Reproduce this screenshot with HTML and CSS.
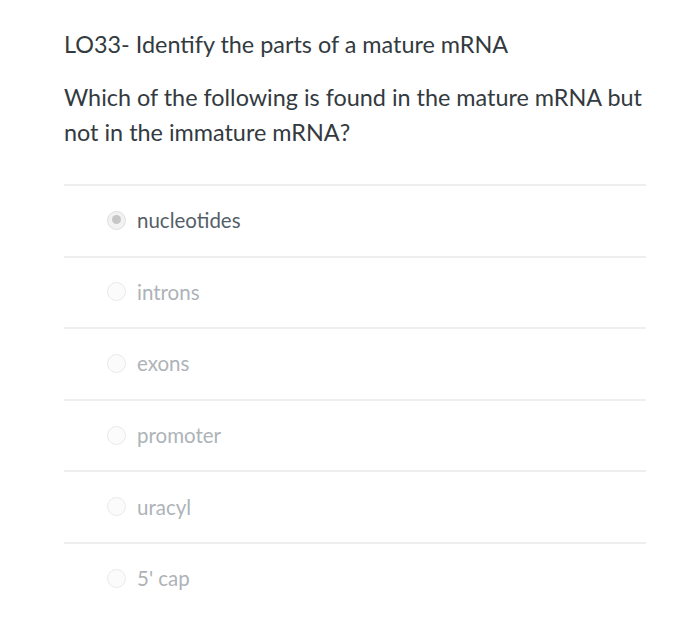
FILE: index.html
```html
<!DOCTYPE html>
<html>
<head>
<meta charset="utf-8">
<link rel="stylesheet" href="styles.css">
</head>
<body>
<div class="quiz">
  <h2 class="title">LO33- Identify the parts of a mature mRNA</h2>
  <p class="question">Which of the following is found in the mature mRNA but not in the immature mRNA?</p>
  <div class="answers">
    <div class="answer selected"><span class="radio"></span><span class="label">nucleotides</span></div>
    <div class="answer"><span class="radio"></span><span class="label">introns</span></div>
    <div class="answer"><span class="radio"></span><span class="label">exons</span></div>
    <div class="answer"><span class="radio"></span><span class="label">promoter</span></div>
    <div class="answer"><span class="radio"></span><span class="label">uracyl</span></div>
    <div class="answer"><span class="radio"></span><span class="label">5' cap</span></div>
  </div>
</div>
</body>
</html>
```

FILE: styles.css
```css
html, body {
  margin: 0;
  padding: 0;
  background: #ffffff;
}
body {
  font-family: Lato, "Open Sans", sans-serif;
  color: #2d3b45;
}
.quiz {
  width: 582px;
  padding: 29px 0 0 64px;
}
.title {
  margin: 0;
  font-size: 23.4px;
  font-weight: 400;
  line-height: 30px;
  color: #333a40;
}
.question {
  margin: 20.5px 0 0 0;
  font-size: 23.4px;
  line-height: 35px;
  color: #333a40;
}
.answers {
  margin-top: 34.5px;
}
.answer {
  display: flex;
  align-items: center;
  height: 71.6px;
  border-top: 2px solid #eceef0;
  box-sizing: border-box;
  padding-left: 44px;
  padding-bottom: 1px;
}
.radio {
  width: 19px;
  height: 19px;
  border-radius: 50%;
  border: 1.5px solid #e8eaec;
  box-sizing: border-box;
  background: #fbfbfb;
  margin-right: 11px;
  margin-left: -1px;
  display: inline-block;
  position: relative;
}
.selected .radio {
  border-color: #dedede;
  background: #f2f2f2;
}
.selected .radio::after {
  content: "";
  position: absolute;
  left: 3.5px;
  top: 3.5px;
  width: 9px;
  height: 9px;
  border-radius: 50%;
  background: #c6c6c6;
}
.label {
  font-size: 20.5px;
  color: #adb3b8;
}
.selected .label {
  color: #555f68;
}
```
